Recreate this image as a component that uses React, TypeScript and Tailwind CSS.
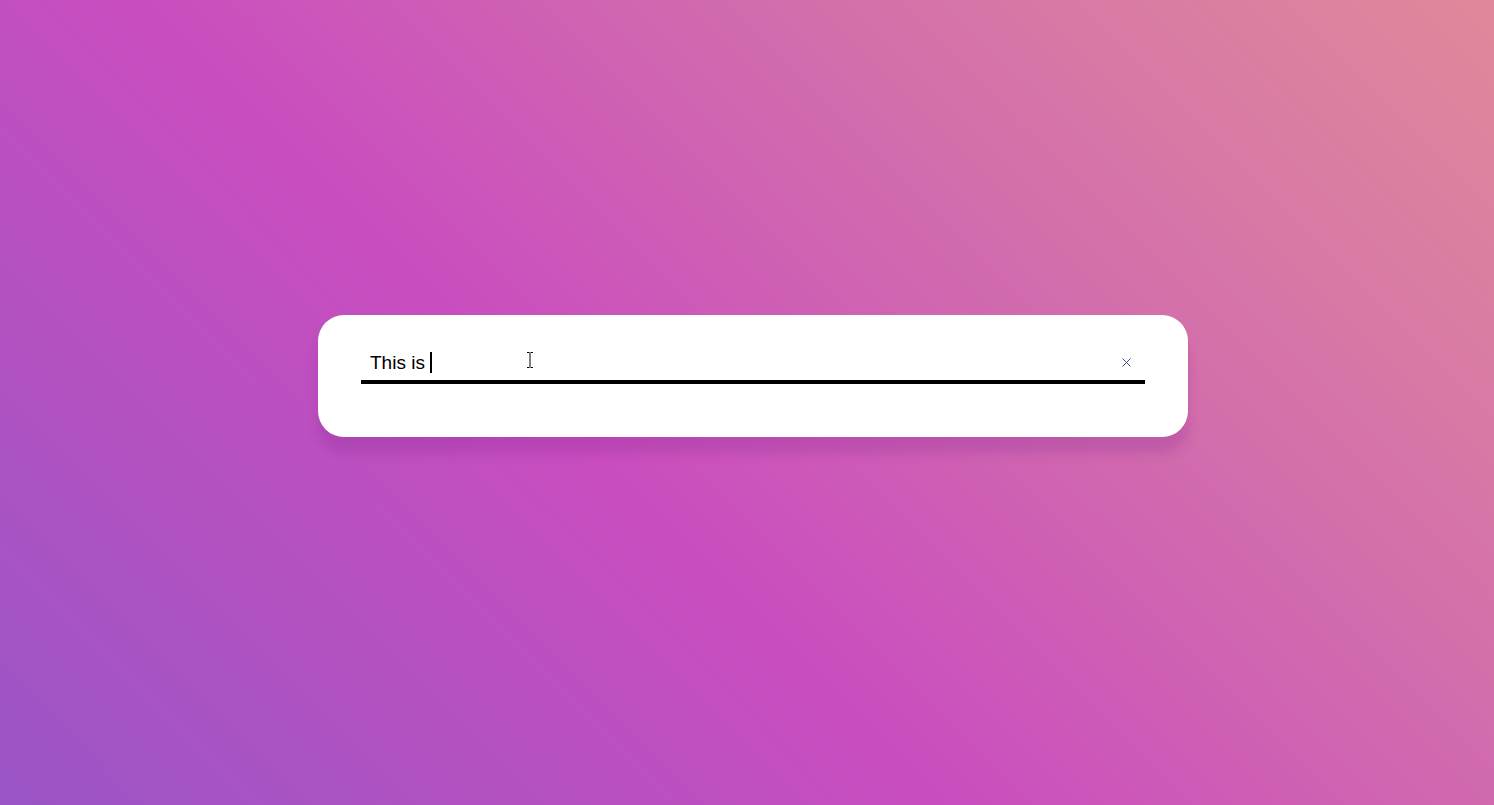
export default function App() {
  return (
    <div
      className="relative w-full min-h-[805px] h-screen flex items-start justify-center bg-[linear-gradient(45deg,#9a55c6_0%,#b651c0_25%,#c94dbf_41%,#d066b0_62%,#d87aa4_82%,#e0889a_100%)]"
      style={{ fontFamily: '"Liberation Sans", Arial, sans-serif' }}
    >
      <div className="ml-[12px] mt-[315px] w-[870px] h-[122px] bg-white rounded-[26px] px-[43px] pt-[37px] shadow-[0_16px_12px_rgba(120,30,140,0.2)]">
        <div className="relative flex items-center h-[21px] mb-[7px] pl-[9px] pr-[14px]">
          <span className="text-[19px] leading-none text-black whitespace-pre">This is </span>
          <span className="w-[2px] h-[21px] bg-black" />
          {/* mouse I-beam */}
          <svg className="absolute left-[165px] top-[0px]" width="8" height="16" viewBox="0 0 8 16">
            <path d="M1 0.5h2.5M4.5 0.5h2.5M4 1v14M1 15.5h2.5M4.5 15.5h2.5" stroke="#000" strokeWidth="1" fill="none" />
          </svg>
          <div className="flex-1" />
          <button className="w-[10px] h-[10px] flex items-center justify-center">
            <svg width="9" height="9" viewBox="0 0 9 9">
              <path d="M0.5 0.5L8.5 8.5M8.5 0.5L0.5 8.5" stroke="#3a4a8a" strokeWidth="1" />
            </svg>
          </button>
        </div>
        <div className="h-[4px] bg-black" />
      </div>
    </div>
  );
}
